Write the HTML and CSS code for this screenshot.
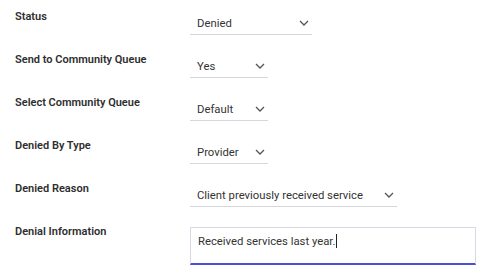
FILE: index.html
```html
<!DOCTYPE html>
<html lang="en">
<head>
    <meta charset="UTF-8">
    <title>Denial Form</title>
    <link rel="stylesheet" href="styles.css">
</head>
<body>
    <div class="form">
        <div class="row">
            <div class="label">Status</div>
            <div class="select w-status"><span>Denied</span><svg class="chev" viewBox="0 0 10 6"><path d="M1 1 L5 5 L9 1"/></svg></div>
        </div>
        <div class="row">
            <div class="label">Send to Community Queue</div>
            <div class="select w-small"><span>Yes</span><svg class="chev" viewBox="0 0 10 6"><path d="M1 1 L5 5 L9 1"/></svg></div>
        </div>
        <div class="row">
            <div class="label">Select Community Queue</div>
            <div class="select w-small"><span>Default</span><svg class="chev" viewBox="0 0 10 6"><path d="M1 1 L5 5 L9 1"/></svg></div>
        </div>
        <div class="row">
            <div class="label">Denied By Type</div>
            <div class="select w-small"><span>Provider</span><svg class="chev" viewBox="0 0 10 6"><path d="M1 1 L5 5 L9 1"/></svg></div>
        </div>
        <div class="row">
            <div class="label">Denied Reason</div>
            <div class="select w-reason"><span>Client previously received service</span><svg class="chev" viewBox="0 0 10 6"><path d="M1 1 L5 5 L9 1"/></svg></div>
        </div>
        <div class="row">
            <div class="label">Denial Information</div>
            <div class="textbox"><span>Received services last year.</span><span class="caret"></span></div>
        </div>
    </div>
</body>
</html>
```

FILE: styles.css
```css
body {
    margin: 0;
    background: #fff;
    font-family: "Roboto", "Liberation Sans", sans-serif;
    color: #333;
}
.form {
    padding: 10px 15px 0 15px;
}
.row {
    display: flex;
    height: 43px;
}
.label {
    width: 175px;
    flex-shrink: 0;
    font-size: 11px;
    font-weight: 600;
    line-height: 14px;
    color: #2e2e2e;
    white-space: nowrap;
}
.select {
    display: flex;
    align-items: center;
    justify-content: space-between;
    height: 25px;
    padding: 2px 3px 0 7px;
    box-sizing: border-box;
    border-bottom: 1px solid #d6d6de;
    font-size: 11.3px;
    color: #333;
    white-space: nowrap;
}
.w-status { width: 122px; }
.w-small { width: 78px; }
.w-reason { width: 207px; }
.chev {
    width: 10px;
    height: 6px;
}
.chev path {
    fill: none;
    stroke: #555;
    stroke-width: 1.3;
}
.textbox {
    margin-top: 2px;
    width: 278px;
    height: 28px;
    padding: 7px 0 0 7px;
    border: 1px solid #d9d9e3;
    border-bottom: 2px solid #4a50d4;
    font-size: 11.3px;
    line-height: 13px;
    color: #333;
    display: flex;
    align-items: flex-start;
}
.caret {
    display: inline-block;
    width: 1px;
    height: 14px;
    margin-top: -1px;
    background: #222;
    margin-left: 1px;
}
```
